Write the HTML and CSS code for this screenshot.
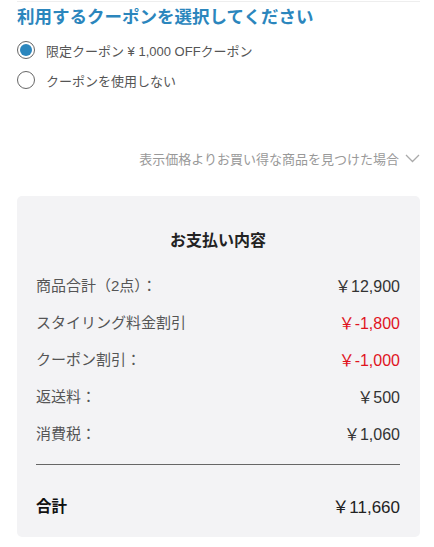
FILE: index.html
```html
<!DOCTYPE html>
<html lang="ja">
<head>
<meta charset="utf-8">
<link rel="stylesheet" href="styles.css">
</head>
<body>
<div class="page">
  <div class="topline"></div>
  <h2 class="title">利用するクーポンを選択してください</h2>
  <ul class="radios">
    <li class="radio-row"><span class="radio checked"></span><span class="radio-label">限定クーポン ¥ 1,000 OFFクーポン</span></li>
    <li class="radio-row"><span class="radio"></span><span class="radio-label">クーポンを使用しない</span></li>
  </ul>
  <div class="link-row">
    <span class="link-text">表示価格よりお買い得な商品を見つけた場合</span>
    <svg class="chev" width="15" height="9" viewBox="0 0 15 9"><path d="M1 1 L7.5 7.5 L14 1" fill="none" stroke="#aaa" stroke-width="1.3"/></svg>
  </div>
  <section class="card">
    <h3 class="card-title">お支払い内容</h3>
    <div class="row"><span class="label">商品合計（2点）：</span><span class="value">￥12,900</span></div>
    <div class="row"><span class="label">スタイリング料金割引</span><span class="value red">￥-1,800</span></div>
    <div class="row"><span class="label">クーポン割引：</span><span class="value red">￥-1,000</span></div>
    <div class="row"><span class="label">返送料：</span><span class="value">￥500</span></div>
    <div class="row"><span class="label">消費税：</span><span class="value">￥1,060</span></div>
    <div class="divider"></div>
    <div class="total"><span class="total-label">合計</span><span class="total-value">￥11,660</span></div>
  </section>
</div>
</body>
</html>
```

FILE: styles.css
```css
* { box-sizing: border-box; }
body {
  margin: 0;
  background: #fff;
  font-family: "Liberation Sans", "Noto Sans CJK JP", sans-serif;
  color: #333;
}
.page {
  padding: 0 14px 0 17px;
}
.topline {
  margin-top: 1px;
  height: 1px;
  background: #eeeeee;
}
.title {
  margin: 2px 0 0;
  font-size: 17.5px;
  line-height: 26px;
  font-weight: 700;
  color: #2b86bd;
  white-space: nowrap;
}
.radios {
  list-style: none;
  margin: 5px 0 0;
  padding: 0;
}
.radio-row {
  height: 30px;
  display: flex;
  align-items: center;
  gap: 11px;
}
.radio {
  width: 18px;
  height: 18px;
  border: 1px solid #666;
  border-radius: 50%;
  display: flex;
  align-items: center;
  justify-content: center;
  flex: none;
}
.radio.checked::after {
  content: "";
  width: 12px;
  height: 12px;
  border-radius: 50%;
  background: #2b86bd;
}
.radio-label {
  font-size: 13px;
  color: #555;
  white-space: nowrap;
}
.link-row {
  margin-top: 53px;
  height: 20px;
  display: flex;
  align-items: center;
  justify-content: flex-end;
  gap: 6px;
}
.link-text {
  font-size: 13px;
  color: #999;
  white-space: nowrap;
}
.chev { flex: none; }
.card {
  margin-top: 28px;
  background: #f3f3f5;
  border-radius: 5px;
  padding: 33px 20px 17px 19px;
}
.card-title {
  margin: 0 0 13px;
  text-align: center;
  font-size: 16px;
  line-height: 24px;
  font-weight: 700;
  color: #222;
}
.row {
  height: 37px;
  display: flex;
  align-items: center;
  justify-content: space-between;
  font-size: 15px;
}
.label { color: #555; white-space: nowrap; }
.value { color: #333; white-space: nowrap; font-size: 16px; }
.value.red { color: #e0141e; }
.divider {
  margin-top: 13px;
  height: 1px;
  background: #666;
}
.total {
  margin-top: 25px;
  height: 30px;
  display: flex;
  align-items: center;
  justify-content: space-between;
}
.total-label {
  font-size: 15.5px;
  font-weight: 700;
  color: #111;
}
.total-value {
  font-size: 17px;
  color: #222;
}
```
